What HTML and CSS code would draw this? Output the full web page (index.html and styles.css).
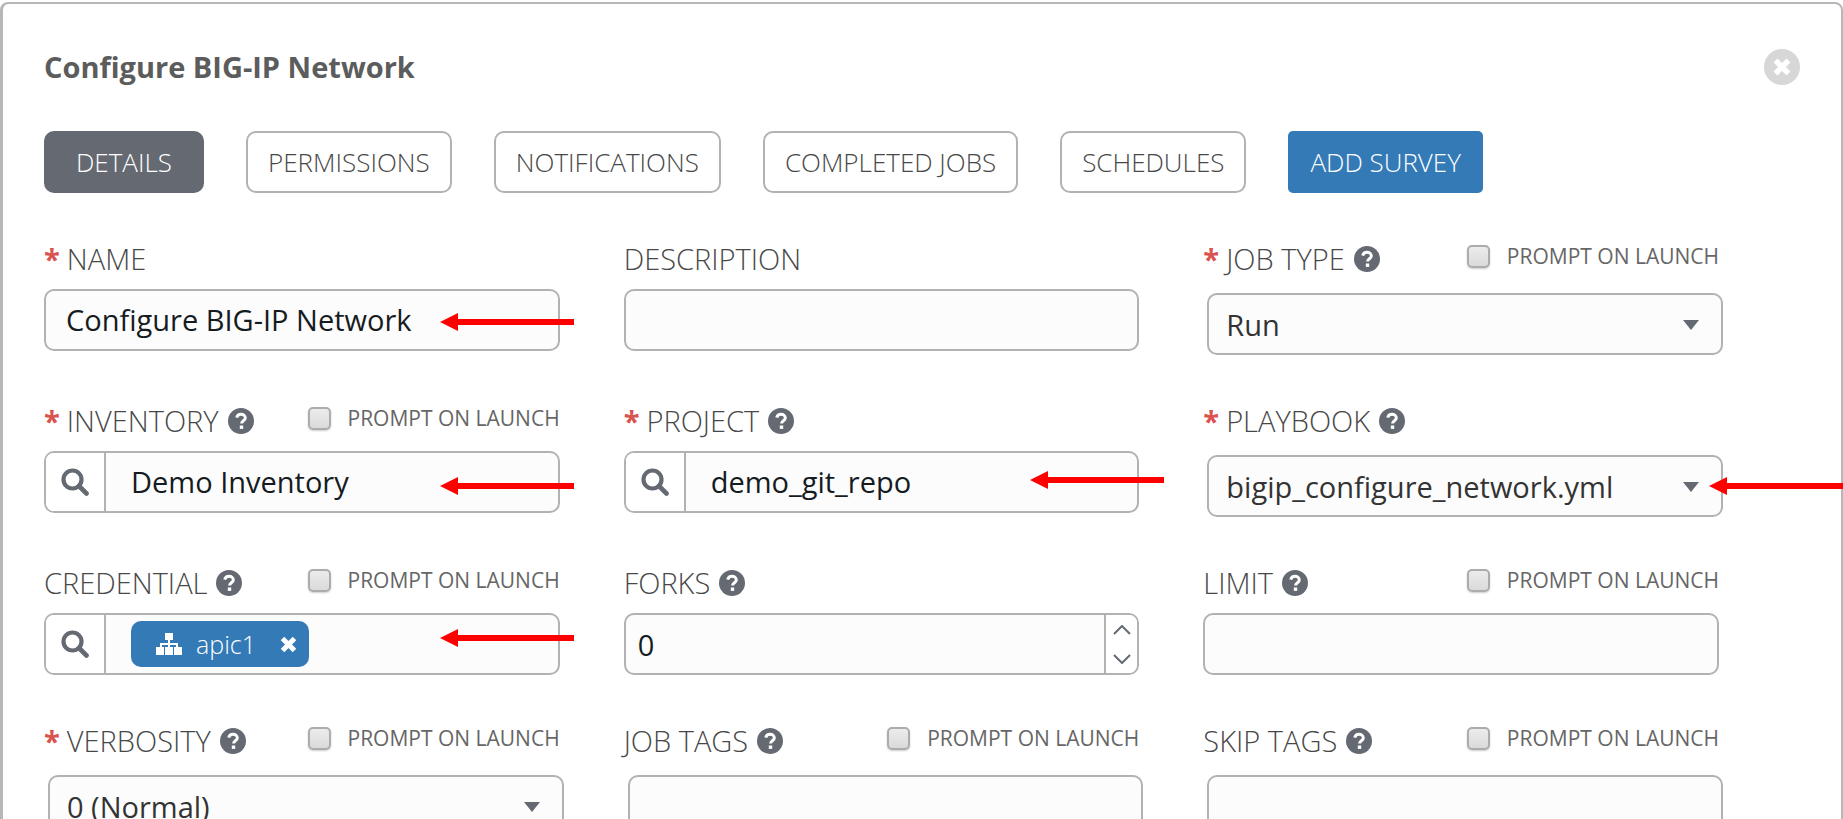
FILE: index.html
```html
<!DOCTYPE html>
<html lang="en">
<head>
<meta charset="utf-8">
<title>Configure BIG-IP Network</title>
<link rel="stylesheet" href="styles.css">
</head>
<body>
<svg class="sprite" aria-hidden="true">
  <symbol id="help" viewBox="0 0 26 26">
    <circle cx="13" cy="13" r="13" fill="currentColor"/>
    <path d="M8.7 9.6C9.3 7.4 10.9 6.3 13 6.3c2.500 0 4.300 1.500 4.300 3.600 0 2.900-3.700 2.900-3.700 5.600" fill="none" stroke="#fff" stroke-width="3"/>
    <rect x="11.800" y="17.500" width="3.400" height="3.400" fill="#fff"/>
  </symbol>
  <symbol id="search" viewBox="0 0 28 28">
    <circle cx="11.500" cy="11.500" r="9" fill="none" stroke="currentColor" stroke-width="4.200"/>
    <path d="M18 18l7.500 7.500" stroke="currentColor" stroke-width="4.600" stroke-linecap="round"/>
  </symbol>
  <symbol id="arrow" viewBox="0 0 134 18">
    <path d="M0 9L18 0v6h116v6H18v6z" fill="#f00"/>
  </symbol>
</svg>
<main class="panel">
  <header class="panel-header">
    <h1 class="title">Configure BIG-IP Network</h1>
    <button class="close" type="button" aria-label="Close">
      <svg viewBox="0 0 36 36" width="36" height="36"><circle cx="18" cy="18" r="18" fill="#d7d7d7"/><path d="M11.500 11.500l13 13M24.500 11.500l-13 13" stroke="#fff" stroke-width="5.500"/></svg>
    </button>
  </header>
  <nav class="tabs">
    <button class="tab tab-active" type="button">DETAILS</button>
    <button class="tab" type="button">PERMISSIONS</button>
    <button class="tab" type="button">NOTIFICATIONS</button>
    <button class="tab" type="button">COMPLETED JOBS</button>
    <button class="tab" type="button">SCHEDULES</button>
    <button class="tab tab-primary" type="button">ADD SURVEY</button>
  </nav>
  <form class="form">
    <div class="field">
      <div class="field-head"><label class="label" for="name"><span class="required">*</span>NAME</label></div>
      <div class="control"><input class="input" id="name" type="text" value="Configure BIG-IP Network"><svg class="arrow arrow-mid" aria-hidden="true"><use href="#arrow"/></svg></div>
    </div>
    <div class="field">
      <div class="field-head"><label class="label" for="description">DESCRIPTION</label></div>
      <div class="control"><input class="input" id="description" type="text"></div>
    </div>
    <div class="field">
      <div class="field-head"><label class="label" for="job-type"><span class="required">*</span>JOB TYPE</label><svg class="help"><use href="#help"/></svg>
        <label class="prompt"><input class="check" type="checkbox">PROMPT ON LAUNCH</label></div>
      <div class="control control-inset control-select"><select class="input" id="job-type"><option>Run</option></select></div>
    </div>

    <div class="field">
      <div class="field-head"><label class="label" for="inventory"><span class="required">*</span>INVENTORY</label><svg class="help"><use href="#help"/></svg>
        <label class="prompt"><input class="check" type="checkbox">PROMPT ON LAUNCH</label></div>
      <div class="control group"><button class="lookup" type="button" aria-label="Search inventories"><svg class="lookup-icon"><use href="#search"/></svg></button><input class="group-input" id="inventory" type="text" value="Demo Inventory"><svg class="arrow arrow-mid" aria-hidden="true"><use href="#arrow"/></svg></div>
    </div>
    <div class="field">
      <div class="field-head"><label class="label" for="project"><span class="required">*</span>PROJECT</label><svg class="help"><use href="#help"/></svg></div>
      <div class="control group"><button class="lookup" type="button" aria-label="Search projects"><svg class="lookup-icon"><use href="#search"/></svg></button><input class="group-input" id="project" type="text" value="demo_git_repo"><svg class="arrow arrow-project" aria-hidden="true"><use href="#arrow"/></svg></div>
    </div>
    <div class="field">
      <div class="field-head"><label class="label" for="playbook"><span class="required">*</span>PLAYBOOK</label><svg class="help"><use href="#help"/></svg></div>
      <div class="control control-inset control-select"><select class="input" id="playbook"><option>bigip_configure_network.yml</option></select><svg class="arrow arrow-playbook" aria-hidden="true"><use href="#arrow"/></svg></div>
    </div>

    <div class="field">
      <div class="field-head"><span class="label">CREDENTIAL</span><svg class="help"><use href="#help"/></svg>
        <label class="prompt"><input class="check" type="checkbox">PROMPT ON LAUNCH</label></div>
      <div class="control group"><button class="lookup" type="button" aria-label="Search credentials"><svg class="lookup-icon"><use href="#search"/></svg></button>
        <div class="chips"><span class="chip">
          <svg viewBox="0 0 26 22" width="26" height="22"><path d="M9 0h8v7h-3v3h8v4h4v8h-8v-8h2v-2h-6v2h3v8H9v-8h3v-2H6v2h2v8H0v-8h4v-4h8V7H9z" fill="#fff"/></svg>
          apic1
          <button class="chip-remove" type="button" aria-label="Remove apic1"><svg viewBox="0 0 17 17" width="17" height="17"><path d="M2.500 2.500l12 12M14.500 2.500l-12 12" stroke="#fff" stroke-width="5"/></svg></button>
        </span></div><svg class="arrow arrow-credential" aria-hidden="true"><use href="#arrow"/></svg></div>
    </div>
    <div class="field">
      <div class="field-head"><label class="label" for="forks">FORKS</label><svg class="help"><use href="#help"/></svg></div>
      <div class="control group"><input class="group-input forks" id="forks" type="text" inputmode="numeric" value="0">
        <div class="stepper">
          <button class="step" type="button" aria-label="Increase"><svg viewBox="0 0 18 10" width="18" height="10"><path d="M1 9l8-8 8 8" fill="none" stroke="currentColor" stroke-width="2"/></svg></button>
          <button class="step" type="button" aria-label="Decrease"><svg viewBox="0 0 18 10" width="18" height="10"><path d="M1 1l8 8 8-8" fill="none" stroke="currentColor" stroke-width="2"/></svg></button>
        </div></div>
    </div>
    <div class="field">
      <div class="field-head"><label class="label" for="limit">LIMIT</label><svg class="help"><use href="#help"/></svg>
        <label class="prompt"><input class="check" type="checkbox">PROMPT ON LAUNCH</label></div>
      <div class="control"><input class="input" id="limit" type="text"></div>
    </div>

    <div class="field">
      <div class="field-head"><label class="label" for="verbosity"><span class="required">*</span>VERBOSITY</label><svg class="help"><use href="#help"/></svg>
        <label class="prompt"><input class="check" type="checkbox">PROMPT ON LAUNCH</label></div>
      <div class="control control-inset control-select"><select class="input" id="verbosity"><option>0 (Normal)</option></select></div>
    </div>
    <div class="field">
      <div class="field-head"><label class="label" for="job-tags">JOB TAGS</label><svg class="help"><use href="#help"/></svg>
        <label class="prompt"><input class="check" type="checkbox">PROMPT ON LAUNCH</label></div>
      <div class="control control-inset"><input class="input" id="job-tags" type="text"></div>
    </div>
    <div class="field">
      <div class="field-head"><label class="label" for="skip-tags">SKIP TAGS</label><svg class="help"><use href="#help"/></svg>
        <label class="prompt"><input class="check" type="checkbox">PROMPT ON LAUNCH</label></div>
      <div class="control control-inset"><input class="input" id="skip-tags" type="text"></div>
    </div>
  </form>
</main>
</body>
</html>
```
FILE: styles.css
```css
* {
  box-sizing: border-box;
}

body {
  margin: 0;
  background: #fff;
  color: #484848;
  font-family: "Open Sans", "Noto Sans", sans-serif;
  overflow-x: hidden;
}

button,
input,
select {
  margin: 0;
  font: inherit;
  color: inherit;
}

button {
  padding: 0;
  border: 0;
  background: none;
  cursor: pointer;
}

.sprite {
  position: absolute;
  width: 0;
  height: 0;
}

.panel {
  margin-top: 2px;
  padding: 44px 41px 56px;
  border: 2px solid #b7b7b7;
  border-left-width: 3px;
  border-radius: 8px;
}

.panel-header {
  display: flex;
  align-items: center;
  justify-content: space-between;
}

.title {
  margin: 0;
  color: #5c5c5c;
  font-size: 29px;
  line-height: 38px;
  font-weight: 700;
}

.close {
  display: flex;
}

.tabs {
  display: flex;
  flex-wrap: wrap;
  gap: 42px;
  margin-top: 45px;
}

.tab {
  height: 62px;
  padding: 0 20px;
  border: 2px solid #b2b2b2;
  border-radius: 10px;
  background: #fff;
  font-size: 26px;
  font-weight: 300;
}

.tab-active {
  padding: 0 30px;
  border-color: #646972;
  background: #646972;
  color: #fff;
}

.tab-primary {
  border-color: #337ab7;
  border-radius: 5px;
  background: #337ab7;
  color: #fff;
}

.form {
  display: grid;
  grid-template-columns: repeat(3, minmax(0, 1fr));
  gap: 48px 64px;
  margin: 48px 81px 0 0;
}

.field-head {
  display: flex;
  align-items: center;
  height: 36px;
}

.label {
  font-size: 29px;
  line-height: 36px;
  font-weight: 300;
  white-space: nowrap;
}

.required {
  margin-right: 7px;
  color: #d9534f;
  font-weight: 700;
}

.help {
  flex: none;
  width: 26px;
  height: 26px;
  margin-left: 9px;
  color: #646972;
}

.prompt {
  display: flex;
  align-items: center;
  gap: 17px;
  height: 30px;
  margin: 0 0 6px auto;
  color: #666;
  font-size: 21px;
  font-weight: 400;
  white-space: nowrap;
}

.check {
  appearance: none;
  width: 23px;
  height: 23px;
  margin: 0;
  border: 2px solid #acacac;
  border-radius: 5px;
  background: linear-gradient(#ececec, #dadada);
  box-shadow: 0 1px 2px #ccc;
}

.control {
  position: relative;
  height: 62px;
  margin-top: 12px;
  color: #161b1f;
  font-size: 29px;
  font-weight: 400;
}

.control-inset {
  margin: 16px -4px 0 4px;
}

.input {
  width: 100%;
  height: 100%;
  padding: 0 20px 2px;
  border: 2px solid #b2b2b2;
  border-radius: 10px;
  background: #fcfcfc;
  outline: 0;
}

select.input {
  appearance: none;
  padding: 0 17px;
  color: #333;
}

.control-select::after {
  content: "";
  position: absolute;
  top: 27px;
  right: 24px;
  border: 8px solid transparent;
  border-top: 10px solid #646972;
  border-bottom: 0;
  pointer-events: none;
}

.group {
  display: flex;
  border: 2px solid #b2b2b2;
  border-radius: 10px;
  background: #fcfcfc;
}

.lookup {
  display: flex;
  align-items: center;
  justify-content: center;
  flex: none;
  width: 60px;
  border-right: 2px solid #b2b2b2;
  border-radius: 8px 0 0 8px;
  background: #fff;
  color: #646972;
}

.lookup-icon {
  width: 28px;
  height: 28px;
}

.group-input {
  flex: 1;
  min-width: 0;
  padding: 0 25px 2px;
  border: 0;
  background: transparent;
  outline: 0;
}

.forks {
  padding: 0 12px;
}

.stepper {
  display: flex;
  flex-direction: column;
  flex: none;
  width: 33px;
  border-left: 2px solid #b2b2b2;
  border-radius: 0 8px 8px 0;
  background: #fff;
  color: #646972;
}

.step {
  display: flex;
  align-items: center;
  justify-content: center;
  flex: 1;
}

.chips {
  display: flex;
  align-items: center;
  padding: 0 25px;
}

.chip {
  display: flex;
  align-items: center;
  gap: 14px;
  height: 46px;
  padding: 0 12px 0 25px;
  border-radius: 10px;
  background: #337ab7;
  color: #fff;
  font-size: 25px;
  font-weight: 300;
}

.chip-remove {
  display: flex;
  margin-left: 10px;
}

.arrow {
  position: absolute;
  right: -14px;
  width: 134px;
  height: 18px;
  pointer-events: none;
}

.group .arrow {
  right: -16px;
}

.arrow-mid {
  top: 24px;
}

.group .arrow-project {
  top: 18px;
  right: -27px;
}

.arrow-playbook {
  top: 22px;
  right: -120px;
}

.arrow-credential {
  top: 14px;
}
```
